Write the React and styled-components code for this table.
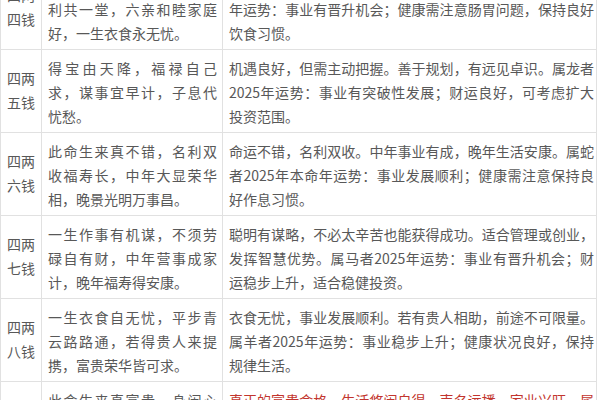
import styled, { createGlobalStyle } from "styled-components";

const GlobalStyle = createGlobalStyle`
  html, body {
    margin: 0;
    padding: 0;
    background: #ffffff;
    overflow: hidden;
  }
  body {
    font-family: "Noto Sans CJK SC", "Noto Sans", sans-serif;
  }
`;

const Table = styled.div`
  display: grid;
  grid-template-columns: 41px 181px 374px;
  width: 597px;
  margin-top: -33px;
  border-left: 1px solid #e1e1e1;
  font-size: 14px;
  line-height: 24px;
  color: #585858;
`;

const Cell = styled.div`
  box-sizing: border-box;
  height: 83px;
  border-right: 1px solid #e1e1e1;
  border-bottom: 1px solid #e1e1e1;
  padding: ${(p) => p.$pad};
  overflow: hidden;
`;

const NameCell = styled(Cell)`
  display: flex;
  flex-direction: column;
  justify-content: center;
  align-items: center;
`;

const Line = styled.div`
  white-space: nowrap;
  text-align: ${(p) => (p.$last ? "left" : "justify")};
  text-align-last: ${(p) => (p.$last ? "left" : "justify")};
  color: ${(p) => (p.$red ? "#c2352e" : "inherit")};
`;

const rows = [
  {
    name: ["四两", "四钱"],
    poem: ["众人相敬重，自成自立名", "利共一堂，六亲和睦家庭", "好，一生衣食永无忧。"],
    text: [
      "为人忠厚，勤劳踏实，衣食丰足，生活美满。属兔者2025",
      "年运势：事业有晋升机会；健康需注意肠胃问题，保持良好",
      "饮食习惯。",
    ],
  },
  {
    name: ["四两", "五钱"],
    poem: ["得宝由天降，福禄自己", "求，谋事宜早计，子息代", "忧愁。"],
    text: [
      "机遇良好，但需主动把握。善于规划，有远见卓识。属龙者",
      "2025年运势：事业有突破性发展；财运良好，可考虑扩大",
      "投资范围。",
    ],
  },
  {
    name: ["四两", "六钱"],
    poem: ["此命生来真不错，名利双", "收福寿长，中年大显荣华", "相，晚景光明万事昌。"],
    text: [
      "命运不错，名利双收。中年事业有成，晚年生活安康。属蛇",
      "者2025年本命年运势：事业发展顺利；健康需注意保持良",
      "好作息习惯。",
    ],
  },
  {
    name: ["四两", "七钱"],
    poem: ["一生作事有机谋，不须劳", "碌自有财，中年营事成家", "计，晚年福寿得安康。"],
    text: [
      "聪明有谋略，不必太辛苦也能获得成功。适合管理或创业，",
      "发挥智慧优势。属马者2025年运势：事业有晋升机会；财",
      "运稳步上升，适合稳健投资。",
    ],
  },
  {
    name: ["四两", "八钱"],
    poem: ["一生衣食自无忧，平步青", "云路路通，若得贵人来提", "携，富贵荣华皆可求。"],
    text: [
      "衣食无忧，事业发展顺利。若有贵人相助，前途不可限量。",
      "属羊者2025年运势：事业稳步上升；健康状况良好，保持",
      "规律生活。",
    ],
  },
  {
    name: ["四两", "九钱"],
    poem: ["此命生来真富贵，身闲心", "安享清福，名利双全福寿", "长，一生荣华乐无穷。"],
    text: [
      "真正的富贵命格，生活悠闲自得，声名远播，家业兴旺。属",
      "猴者2025年运势：事业顺风顺水；财运亨通，宜把握良机",
      "稳中求进。",
    ],
    red: true,
  },
];

function Lines({ lines, red }) {
  return lines.map((l, i) => (
    <Line key={i} $last={i === lines.length - 1} $red={red}>
      {l}
    </Line>
  ));
}

export default function App() {
  return (
    <>
      <GlobalStyle />
      <Table>
        {rows.map((r, i) => (
          <div key={i} style={{ display: "contents" }}>
            <NameCell $pad="4px 0 6px">
              {r.name.map((n) => (
                <div key={n}>{n}</div>
              ))}
            </NameCell>
            <Cell $pad="6px 5px 4px 6px">
              <Lines lines={r.poem} />
            </Cell>
            <Cell $pad="6px 2px 4px 6px">
              <Lines lines={r.text} red={r.red} />
            </Cell>
          </div>
        ))}
      </Table>
    </>
  );
}
